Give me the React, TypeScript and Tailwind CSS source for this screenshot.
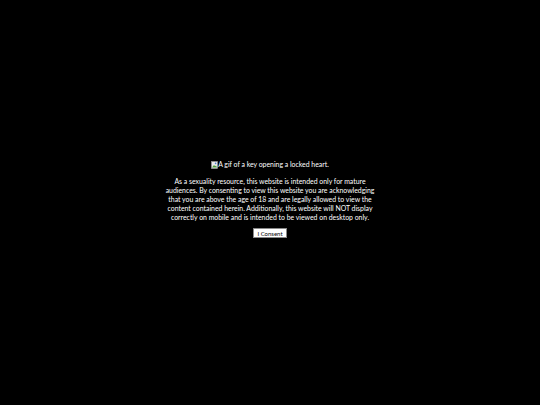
import React from "react";

function BrokenImg() {
  return (
    <svg width="7" height="8" viewBox="0 0 7 8" className="inline-block">
      <rect x="0.5" y="0.5" width="6" height="7" fill="#e8e8e8" stroke="#9a9a9a" strokeWidth="0.6" />
      <path d="M1 6.5 L3 4 L4.2 5.2 L5 4.5 L6 6.5 Z" fill="#4a9a3a" />
      <circle cx="4.6" cy="2.4" r="0.8" fill="#4a7fd0" />
    </svg>
  );
}

export default function App() {
  return (
    <div
      className="w-[540px] h-[405px] bg-black flex items-center justify-center text-white"
      style={{ fontFamily: "Lato, 'Open Sans', sans-serif" }}
    >
      <div className="flex flex-col items-center mt-[-7px]">
        <div className="text-[6.9px] leading-[9px] flex items-center">
          <BrokenImg />
          <span>A gif of a key opening a locked heart.</span>
        </div>
        <p className="w-[230px] text-center text-[6.9px] leading-[9px] mt-[8px]">
          As a sexuality resource, this website is intended only for mature
          <br />
          audiences. By consenting to view this website you are acknowledging
          <br />
          that you are above the age of 18 and are legally allowed to view the
          <br />
          content contained herein. Additionally, this website will NOT display
          <br />
          correctly on mobile and is intended to be viewed on desktop only.
        </p>
        <button className="mt-[6px] bg-white text-black text-[6px] leading-[7px] px-[3px] py-[0.5px] border border-[#888]">
          I Consent
        </button>
      </div>
    </div>
  );
}
